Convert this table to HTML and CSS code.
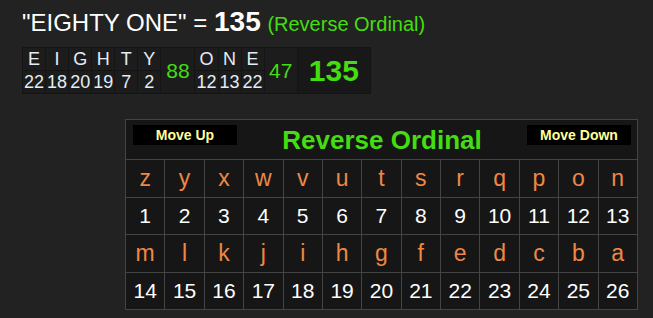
FILE: index.html
```html
<!DOCTYPE html>
<html>
<head>
<meta charset="utf-8">
<link rel="stylesheet" href="styles.css">
</head>
<body>
<div class="page">
  <h1 class="title">"EIGHTY ONE" = <b class="title-total">135</b> <span class="title-cipher">(Reverse Ordinal)</span></h1>

  <table class="breakdown">
    <colgroup>
      <col class="c-l"><col class="c-l"><col class="c-l"><col class="c-l"><col class="c-l"><col class="c-l">
      <col class="c-w1">
      <col class="c-l"><col class="c-l"><col class="c-l">
      <col class="c-w2">
      <col class="c-t">
    </colgroup>
    <tr class="bd-letters">
      <td>E</td><td>I</td><td>G</td><td>H</td><td>T</td><td>Y</td>
      <td class="bd-word" rowspan="2">88</td>
      <td>O</td><td>N</td><td>E</td>
      <td class="bd-word" rowspan="2">47</td>
      <td class="bd-total" rowspan="2">135</td>
    </tr>
    <tr class="bd-values">
      <td>22</td><td>18</td><td>20</td><td>19</td><td>7</td><td>2</td>
      <td>12</td><td>13</td><td>22</td>
    </tr>
  </table>

  <table class="chart">
    <tr class="chart-head">
      <th colspan="13">
        <div class="head-inner">
          <button class="move move-up">Move Up</button>
          <span class="chart-title">Reverse Ordinal</span>
          <button class="move move-down">Move Down</button>
        </div>
      </th>
    </tr>
    <tr class="row-letters">
      <td>z</td><td>y</td><td>x</td><td>w</td><td>v</td><td>u</td><td>t</td><td>s</td><td>r</td><td>q</td><td>p</td><td>o</td><td>n</td>
    </tr>
    <tr class="row-values">
      <td>1</td><td>2</td><td>3</td><td>4</td><td>5</td><td>6</td><td>7</td><td>8</td><td>9</td><td>10</td><td>11</td><td>12</td><td>13</td>
    </tr>
    <tr class="row-letters">
      <td>m</td><td>l</td><td>k</td><td>j</td><td>i</td><td>h</td><td>g</td><td>f</td><td>e</td><td>d</td><td>c</td><td>b</td><td>a</td>
    </tr>
    <tr class="row-values">
      <td>14</td><td>15</td><td>16</td><td>17</td><td>18</td><td>19</td><td>20</td><td>21</td><td>22</td><td>23</td><td>24</td><td>25</td><td>26</td>
    </tr>
  </table>
</div>
</body>
</html>
```

FILE: styles.css
```css
html, body {
  margin: 0;
  padding: 0;
  background: #222222;
}

body {
  font-family: "Liberation Sans", Arial, sans-serif;
  color: #ffffff;
}

.page {
  padding: 6px 0 0 22px;
}

.title {
  margin: 0;
  font-size: 24px;
  font-weight: normal;
  line-height: 32px;
  color: #ffffff;
  white-space: nowrap;
}

.title-total {
  font-size: 28px;
  font-weight: bold;
}

.title-cipher {
  font-size: 20px;
  color: #44dd11;
}

/* breakdown table */
.breakdown {
  margin-top: 7px;
  border-collapse: collapse;
  table-layout: fixed;
  width: 349px;
  background: #1c1c1c;
  border: 1px solid #181818;
}

.c-l { width: 23px; }
.c-w1 { width: 34px; }
.c-w2 { width: 33px; }
.c-t { width: 73px; }

.breakdown td {
  padding: 0;
  text-align: center;
  border: 1px solid #141414;
  color: #e4ecf4;
  font-size: 18px;
}

.bd-letters td {
  height: 22px;
  line-height: 22px;
}

.bd-values td {
  height: 22px;
  line-height: 22px;
}

.breakdown .bd-word {
  color: #44dd11;
  font-size: 21px;
  vertical-align: middle;
}

.breakdown .bd-total {
  color: #44dd11;
  font-size: 30px;
  font-weight: bold;
  background: #181818;
  vertical-align: middle;
}

/* chart table */
.chart {
  margin: 25px 0 0 103px;
  border-collapse: collapse;
  table-layout: fixed;
  width: 513px;
  background: #161616;
  border: 1px solid #444444;
}

.chart th,
.chart td {
  border: 1px solid #444444;
  padding: 0;
  text-align: center;
}

.chart-head th {
  height: 39px;
  vertical-align: top;
}

.head-inner {
  display: grid;
  grid-template-columns: 1fr auto 1fr;
  align-items: start;
  padding: 5px 6px 0 7px;
}

.move {
  width: 104px;
  height: 20px;
  padding: 0;
  margin: 0;
  border: none;
  background: #000000;
  color: #ffff99;
  font-family: "Liberation Sans", Arial, sans-serif;
  font-size: 14px;
  font-weight: bold;
  line-height: 20px;
}

.move-up { justify-self: start; }
.move-down { justify-self: end; }

.chart-title {
  color: #44dd11;
  font-size: 26px;
  font-weight: bold;
  line-height: 30px;
}

.row-letters td {
  height: 37px;
  color: #ee8844;
  font-size: 23px;
}

.row-values td {
  height: 36px;
  color: #ffffff;
  font-size: 21px;
}
```
